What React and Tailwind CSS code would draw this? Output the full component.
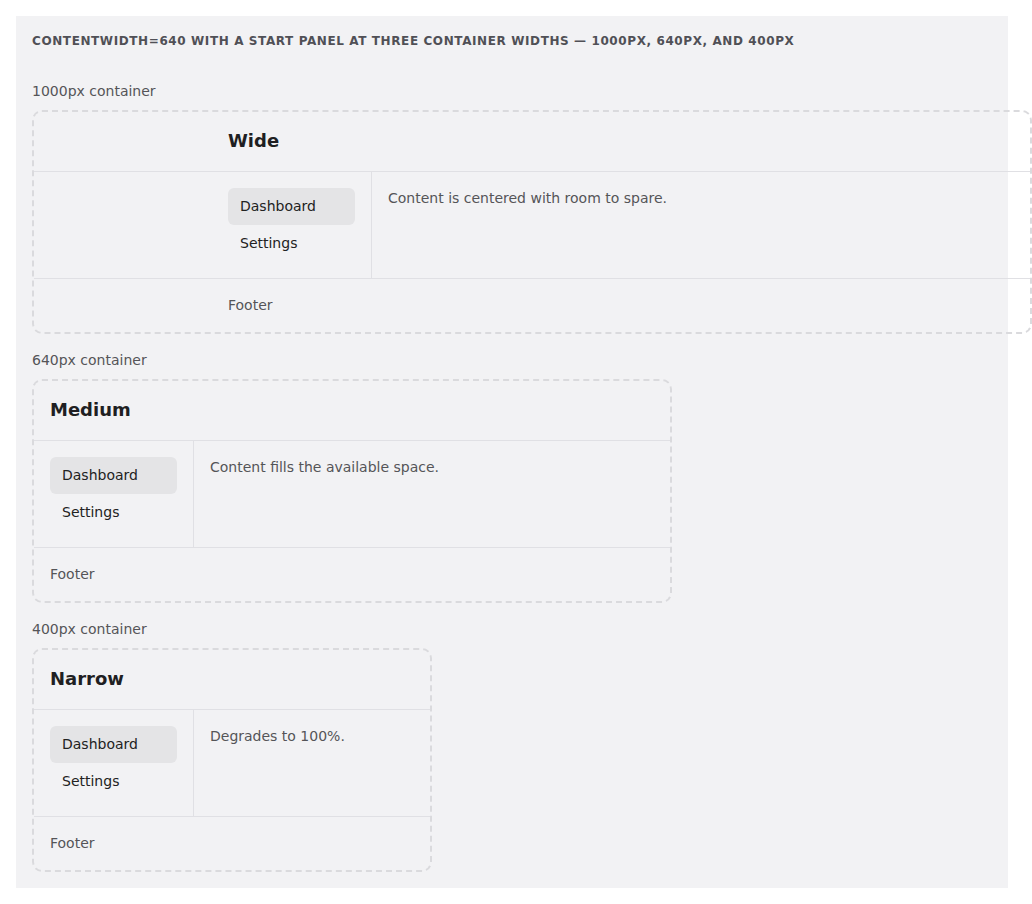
import React from 'react';

const sections = [
  { label: '1000px container', width: 'w-[1000px]', title: 'Wide', body: 'Content is centered with room to spare.' },
  { label: '640px container', width: 'w-[640px]', title: 'Medium', body: 'Content fills the available space.' },
  { label: '400px container', width: 'w-[400px]', title: 'Narrow', body: 'Degrades to 100%.' },
];

function NavItem({ active, children }) {
  return (
    <div
      className={
        active
          ? 'rounded-md bg-[#e4e4e6] px-3 py-2 text-[14px] leading-[21px] text-[#222]'
          : 'rounded-md px-3 py-2 text-[14px] leading-[21px] text-[#222]'
      }
    >
      {children}
    </div>
  );
}

// Frame layout: header / start panel + main / footer, with content capped at 640px
function Frame({ width, title, body }) {
  return (
    <div className={`${width} shrink-0 rounded-[10px] border-2 border-dashed border-[#dadadd]`}>
      <div className="border-b border-[#e0e0e4]">
        <div className="mx-auto w-full max-w-[640px] px-4 pt-[15px] pb-[17px]">
          <h2 className="text-[18px] font-bold leading-[27px] text-[#1f1f22]">{title}</h2>
        </div>
      </div>
      <div className="border-b border-[#e0e0e4]">
        <div className="mx-auto flex w-full max-w-[640px]">
          <aside className="w-[160px] shrink-0 border-r border-[#e0e0e4] p-4">
            <NavItem active>Dashboard</NavItem>
            <NavItem>Settings</NavItem>
          </aside>
          <main className="flex-1 p-4 text-[14px] leading-[21px] text-[#555558]">{body}</main>
        </div>
      </div>
      <div className="mx-auto w-full max-w-[640px] p-4 text-[14px] leading-[21px] text-[#555558]">Footer</div>
    </div>
  );
}

export default function App() {
  return (
    <div className="min-h-screen bg-white p-4 font-['DejaVu_Sans',sans-serif]">
      <div className="w-[992px] bg-[#f2f2f4] p-4">
        <h1 className="mb-[31px] text-[12px] font-bold uppercase leading-[18px] tracking-[0.05em] text-[#505056]">
          contentWidth=640 with a start panel at three container widths — 1000px, 640px, and 400px
        </h1>
        <div className="flex flex-col gap-4">
          {sections.map((s) => (
            <section key={s.label}>
              <div className="mb-2 text-[14px] leading-[21px] text-[#555558]">{s.label}</div>
              <Frame width={s.width} title={s.title} body={s.body} />
            </section>
          ))}
        </div>
      </div>
    </div>
  );
}
